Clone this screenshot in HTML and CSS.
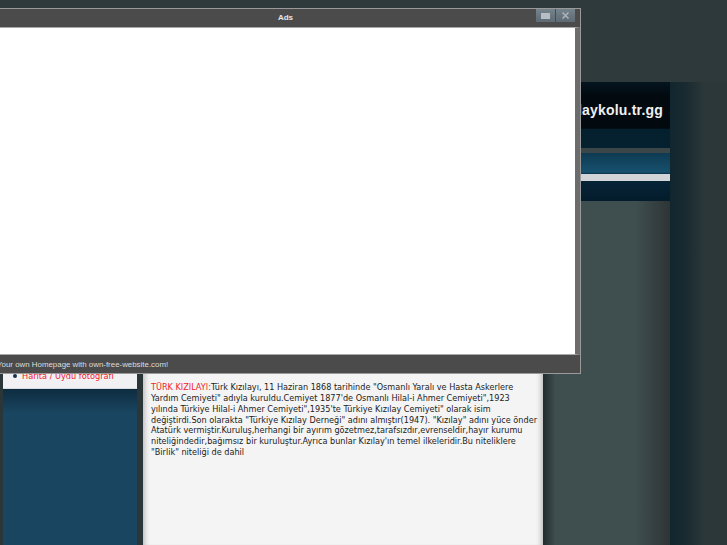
FILE: index.html
```html
<!DOCTYPE html>
<html lang="tr">
<head>
  <meta charset="UTF-8" />
  <title>Kızılay Kolu</title>
  <link rel="stylesheet" href="styles.css">
</head>
<body>

  <div class="page">
    <div class="site">
      <div class="top"></div>
      <div class="header"><span class="logo">kizilaykolu.tr.gg</span></div>
      <div class="strip"></div>
      <div class="nav"><div class="nav-bar"></div></div>
      <div class="columns">
        <div class="sidebar">
          <ul class="menu">
            <li>Harita / Uydu fotoğrafı</li>
          </ul>
        </div>
        <div class="main">
          <p><span class="lead">TÜRK KIZILAYI:</span>Türk Kızılayı, 11 Haziran 1868 tarihinde "Osmanlı Yaralı ve Hasta Askerlere Yardım Cemiyeti" adıyla kuruldu.Cemiyet 1877'de Osmanlı Hilal-i Ahmer Cemiyeti",1923 yılında Türkiye Hilal-i Ahmer Cemiyeti",1935'te Türkiye Kızılay Cemiyeti" olarak isim değiştirdi.Son olarakta "Türkiye Kızılay Derneği" adını almıştır(1947). "Kızılay" adını yüce önder Atatürk vermiştir.Kuruluş,herhangi bir ayırım gözetmez,tarafsızdır,evrenseldir,hayır kurumu niteliğindedir,bağımsız bir kuruluştur.Ayrıca bunlar Kızılay'ın temel ilkeleridir.Bu niteliklere "Birlik" niteliği de dahil</p>
        </div>
        <div class="gutter"></div>
      </div>
    </div>
    <div class="edge"></div>
  </div>

  <div class="popup">
    <div class="popup-title">
      <span>Ads</span>
      <div class="popup-btns">
        <div class="btn">
          <svg width="9" height="6" viewBox="0 0 9 6"><rect width="9" height="6" fill="#b4bec4"/></svg>
        </div>
        <div class="btn">
          <svg width="9" height="7" viewBox="0 0 9 7"><path d="M1.5 0.5l6 6M7.5 0.5l-6 6" stroke="#aab4ba" stroke-width="1.5" fill="none"/></svg>
        </div>
      </div>
    </div>
    <div class="popup-body"></div>
    <div class="popup-foot">Your own Homepage with own-free-website.com!</div>
  </div>

</body>
</html>
```

FILE: styles.css
```css
* {
  box-sizing: border-box;
}
html, body {
  height: 100%;
}
body {
  margin: 0;
  background: #2e393b;
  overflow: hidden;
  font-family: 'DejaVu Sans', sans-serif;
}
.page {
  display: flex;
  height: 545px;
}
.site {
  width: 670px;
  flex: none;
  display: flex;
  flex-direction: column;
}
.top {
  height: 82px;
  background: #2f3a3c;
}
.header {
  height: 66px;
  display: flex;
  justify-content: flex-end;
  align-items: center;
  padding: 0 7px 11px 0;
  background: linear-gradient(to bottom, #04141e 0%, #020a10 20%, #02090f 70%, #04202f 72%, #05202f 100%);
}
.logo {
  color: #f0f0f0;
  font: bold 14px 'Liberation Sans', sans-serif;
  letter-spacing: 0.2px;
}
.strip {
  height: 5px;
  background: #3a4648;
}
.nav {
  height: 48px;
  padding-top: 21px;
  background: linear-gradient(to bottom, #0e3a52 0%, #17506e 40%, #06263a 45%, #041c2c 100%);
}
.nav-bar {
  height: 7px;
  background: #d2d4d8;
}
.columns {
  flex: 1;
  display: flex;
  background: #2a3638;
  padding-left: 3px;
}
.sidebar {
  width: 134px;
  flex: none;
  background: linear-gradient(to bottom, #0e2c40 0%, #1a4560 7%, #1a4560 100%) no-repeat 0 188px;
}
.menu {
  height: 188px;
  margin: 0;
  padding: 0 0 6px 10px;
  list-style: none;
  display: flex;
  flex-direction: column;
  justify-content: flex-end;
  background: #f1f1f4;
  color: #f0202c;
  font-size: 8.2px;
  line-height: 11px;
  border-bottom: 1px solid #d8dce0;
}
.menu li::before {
  content: "";
  display: inline-block;
  width: 4px;
  height: 4px;
  margin: 0 5px 1px 0;
  border-radius: 50%;
  background: #12344a;
}
.main {
  width: 400px;
  margin-left: 6px;
  flex: none;
  padding: 181px 6px 0 8px;
  background: #f4f4f4;
  box-shadow: inset 6px 0 5px -4px #bbb, inset -6px 0 5px -4px #bbb;
  color: #222;
  font-size: 8.15px;
  line-height: 10.85px;
}
.main p {
  margin: 0;
}
.lead {
  color: #f0242c;
}
.gutter {
  flex: 1;
  background: linear-gradient(to right, #222c2e 0%, #3f4f4f 10%, #3f4f4f 72%, #2e3436 100%);
}
.edge {
  flex: 1;
  margin-top: 82px;
  background: linear-gradient(to right, #12262e 0%, #1a2b31 30%, #2c3739 60%, #2c3739 100%);
}
.popup {
  position: absolute;
  left: -11px;
  top: 8px;
  width: 592px;
  height: 366px;
  display: flex;
  flex-direction: column;
  background: #4b4b4b;
  border: 1px solid #9a9a9a;
}
.popup-title {
  position: relative;
  height: 18px;
  display: flex;
  align-items: center;
  justify-content: center;
  padding: 0 0 1px 1px;
  color: #e6e6e6;
  font: bold 8px 'Liberation Sans', sans-serif;
}
.popup-btns {
  position: absolute;
  top: 0;
  right: 5px;
  display: flex;
  gap: 1px;
}
.btn {
  width: 19px;
  height: 13px;
  display: flex;
  align-items: center;
  justify-content: center;
  background: linear-gradient(to bottom, #75838c, #5e6a74);
}
.popup-body {
  height: 328px;
  background: #fff;
  border: 1px solid #a8a8a8;
  border-right: 5px solid #6c6c6c;
}
.popup-foot {
  flex: 1;
  display: flex;
  align-items: center;
  padding-left: 7px;
  color: #dcdcdc;
  font: 7.9px 'Liberation Sans', sans-serif;
}
```
